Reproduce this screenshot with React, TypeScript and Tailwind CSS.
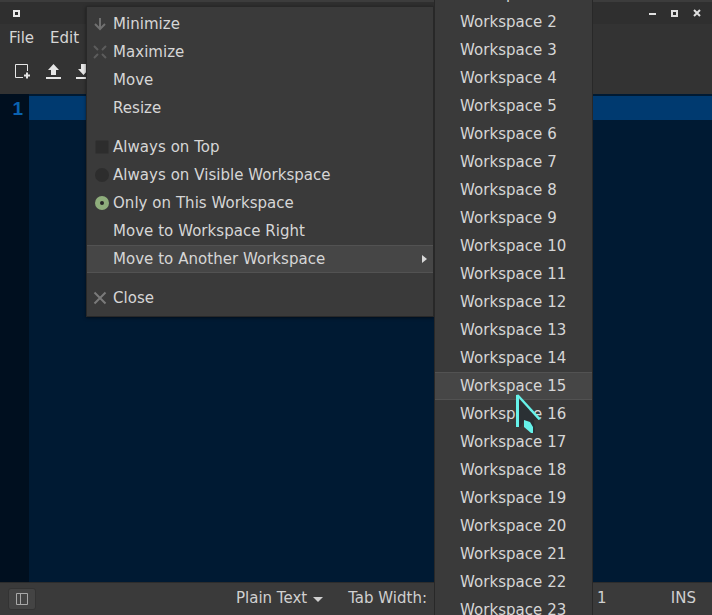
import React from 'react';

const font = { fontFamily: '"DejaVu Sans", sans-serif' };

function WindowButtons() {
  return (
    <div className="flex items-center gap-[15px] pr-[11px]">
      <div className="w-[7px] h-[2px] bg-[#e0e0e0] mt-[1px]" />
      <div className="w-[7px] h-[7px] border-2 border-[#e0e0e0]" />
      <svg width="8" height="8" viewBox="0 0 8 8"><path d="M1 1l6 6M7 1l-6 6" stroke="#e0e0e0" strokeWidth="2" /></svg>
    </div>
  );
}

function Toolbar() {
  return (
    <div className="h-[44px] flex items-center gap-[15px] pl-[15px] pb-[2px] bg-[#333333]">
      <svg width="16" height="17" viewBox="0 0 16 17" fill="none">
        <path d="M8 14.5H.5V1.5h12V8" stroke="#e6e6e6" />
        <path d="M9 12.5h6M12 9.5v6" stroke="#e6e6e6" strokeWidth="2" />
      </svg>
      <svg width="15" height="16" viewBox="0 0 15 16">
        <path d="M7.5 1L13 7H10v5H5V7H2z M0 14h15v2H0z" fill="#e6e6e6" />
      </svg>
      <svg width="15" height="16" viewBox="0 0 15 16">
        <path d="M5 1h5v5h3l-5.5 6L2 6h3z M0 14h15v2H0z" fill="#e6e6e6" />
      </svg>
    </div>
  );
}

function MainMenuItem({ label, icon, hover, arrow }: { label: string; icon?: React.ReactNode; hover?: boolean; arrow?: boolean }) {
  return (
    <div className={`h-[28px] flex items-center relative pl-[26px] ${hover ? 'bg-[#464646] border-y border-[#525252]' : ''}`}>
      {icon && <div className="absolute left-[4px] top-[5px] w-[18px] h-[18px] flex items-center justify-center">{icon}</div>}
      <span>{label}</span>
      {arrow && <div className="absolute right-[6px] top-[9px] w-0 h-0 border-y-[4px] border-y-transparent border-l-[5px] border-l-[#d8d8d8]" />}
    </div>
  );
}

function WindowMenu() {
  return (
    <div className="absolute left-[86px] top-[6px] w-[348px] h-[311px] bg-[#3a3a3a] border border-[#282828] text-[#d6d6d6] text-[15px] tracking-[0.04px] pt-[3px] shadow-[0_1px_3px_rgba(0,0,0,0.5)]">
      <MainMenuItem label="Minimize" icon={
        <svg width="16" height="16" viewBox="0 0 16 16" fill="none"><path d="M8 2v11M3 8l5 5 5-5" stroke="#707070" strokeWidth="2" /></svg>
      } />
      <MainMenuItem label="Maximize" icon={
        <svg width="14" height="14" viewBox="0 0 14 14" fill="none"><path d="M1 1l4 4M13 1L9 5M1 13l4-4M13 13L9 9" stroke="#5c5c5c" strokeWidth="2" /></svg>
      } />
      <MainMenuItem label="Move" />
      <MainMenuItem label="Resize" />
      <div className="h-[11px]" />
      <MainMenuItem label="Always on Top" icon={<div className="ml-[4px] w-[14px] h-[14px] rounded-[2px] bg-[#2d2d2d] border border-[#333333]" />} />
      <MainMenuItem label="Always on Visible Workspace" icon={<div className="ml-[4px] w-[14px] h-[14px] rounded-full bg-[#2d2d2d]" />} />
      <MainMenuItem label="Only on This Workspace" icon={
        <div className="ml-[4px] w-[14px] h-[14px] rounded-full bg-[#8fae7c] flex items-center justify-center"><div className="w-[4px] h-[4px] rounded-full bg-[#262626]" /></div>
      } />
      <MainMenuItem label="Move to Workspace Right" />
      <MainMenuItem label="Move to Another Workspace" hover arrow />
      <div className="h-[11px]" />
      <MainMenuItem label="Close" icon={
        <svg width="14" height="14" viewBox="0 0 14 14" fill="none"><path d="M1.5 1.5l11 11M12.5 1.5l-11 11" stroke="#7a7a7a" strokeWidth="2" /></svg>
      } />
    </div>
  );
}

function WorkspaceMenu() {
  const rows = Array.from({ length: 23 }, (_, i) => i + 1);
  return (
    <div className="absolute left-[434px] top-[-20px] w-[159px] h-[650px] bg-[#3a3a3a] border-x border-[#282828] text-[#d6d6d6] text-[15px] tracking-[0.04px]">
      {rows.map(n => (
        <div key={n} className={`h-[28px] flex items-center pl-[25px] ${n === 15 ? 'bg-[#464646] border-y border-[#525252]' : ''}`}>
          Workspace {n}
        </div>
      ))}
    </div>
  );
}

function Cursor() {
  return (
    <svg className="absolute left-[515px] top-[394px]" width="28" height="40" viewBox="0 0 28 40">
      <path d="M2 4v29h4l3-7 9 13 2-1-1-12h6z" fill="#2a3034" />
      <path d="M1 1h3v32H1z" fill="#66f2ea" />
      <path d="M1 1l2.5-.5L26 25l-2.5 1z" fill="#66f2ea" />
      <path d="M9 26l6 2 3 5v6h-2l-7-6z" fill="#66f2ea" />
    </svg>
  );
}

export default function App() {
  return (
    <div className="relative w-[712px] h-[615px] overflow-hidden bg-[#333333]" style={font}>
      <div className="h-full flex flex-col">
        <div className="h-[24px] flex items-center justify-between pl-[13px] bg-[#2f2f2f] border-t-2 border-[#3c3c3c]">
          <div className="w-[7px] h-[7px] bg-[#e8e8e8] flex items-center justify-center">
            <div className="w-[3px] h-[3px] bg-[#2a2a2a]" />
          </div>
          <WindowButtons />
        </div>
        <div className="h-[26px] flex items-center gap-[16px] pl-[9px] pt-[2px] text-[15px] text-[#d6d6d6] bg-[#333333]">
          <span>File</span>
          <span>Edit</span>
        </div>
        <Toolbar />
        <div className="flex-1 flex min-h-0 bg-[#001a33]">
          <div className="w-[29px] bg-[#000f1f] text-right pr-[6px] pt-[2px] text-[#0a62b0] text-[19px] font-bold leading-[26px]" style={{ fontFamily: '"Liberation Sans", sans-serif' }}>1</div>
          <div className="flex-1 pt-[2px]">
            <div className="h-[24px] bg-[#003a70]" />
          </div>
        </div>
        <div className="h-[33px] flex items-center bg-[#3a3a3a] border-t border-[#2c2c2c] text-[15px] text-[#d0d0d0]">
          <div className="ml-[8px] w-[28px] h-[22px] rounded-[3px] bg-[#444444] border border-[#333333] flex items-center justify-center">
            <svg width="12" height="12" viewBox="0 0 12 12" fill="none"><path d="M.5.5h11v11H.5zM4.5.5v11" stroke="#a8a8a8" /></svg>
          </div>
          <span className="ml-[200px] -mt-[2px]">Plain Text</span>
          <div className="ml-[6px] mt-[1px] w-0 h-0 border-x-[5px] border-x-transparent border-t-[5px] border-t-[#d0d0d0]" />
          <span className="ml-[25px] -mt-[2px]">Tab Width:</span>
          <span className="ml-[170px] -mt-[2px]">1</span>
          <span className="ml-auto mr-[16px] -mt-[2px]">INS</span>
        </div>
      </div>
      <WindowMenu />
      <WorkspaceMenu />
      <Cursor />
    </div>
  );
}
